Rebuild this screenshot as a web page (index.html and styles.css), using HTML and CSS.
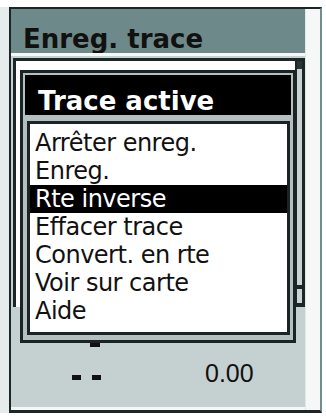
FILE: index.html
```html
<!DOCTYPE html>
<html lang="fr">
<head>
<meta charset="utf-8">
<title>Enreg. trace</title>
<link rel="stylesheet" href="styles.css">
</head>
<body>
<div class="frame">
  <div class="screen">
    <div class="title-bar">Enreg. trace</div>
    <div class="sep"></div>
    <div class="gap"></div>
    <div class="listbox">
      <div class="list-area"></div>
      <div class="scrollbar">
        <div class="arrow"></div>
        <div class="track"></div>
        <div class="thumb"></div>
      </div>
    </div>
    <div class="lower">
      <div class="small-dash"></div>
      <div class="row">
        <div class="dashes"><span class="dash"></span><span class="dash"></span></div>
        <div class="value">0.00</div>
      </div>
    </div>
    <div class="bottom-line"></div>
  </div>
  <div class="edge"></div>

  <div class="popup">
    <div class="popup-title">Trace active</div>
    <div class="menu">
      <div class="item">Arrêter enreg.</div>
      <div class="item">Enreg.</div>
      <div class="item selected">Rte inverse</div>
      <div class="item">Effacer trace</div>
      <div class="item">Convert. en rte</div>
      <div class="item">Voir sur carte</div>
      <div class="item">Aide</div>
    </div>
  </div>
</div>
</body>
</html>
```

FILE: styles.css
```css
html, body {
  margin: 0;
  padding: 0;
}
body {
  background: #ffffff;
  width: 326px;
  height: 418px;
  overflow: hidden;
  font-family: "DejaVu Sans", sans-serif;
}
.frame {
  position: relative;
  margin: 7px 4px 5px 9px;
  height: 406px;
  box-sizing: border-box;
  border-top: 2px solid #1c2626;
  border-left: 2px solid #1c2626;
  border-right: 2px solid #6f8f8f;
  border-bottom: 3px solid #1c2626;
  display: flex;
  box-shadow: -9px 0 0 #e6ebeb;
}
.screen {
  width: 294px;
  display: flex;
  flex-direction: column;
  background: #c5d0d0;
}
.edge {
  flex: 1;
  background: #f6f8f8;
  border-left: 1px solid #e2e8e8;
}
.title-bar {
  height: 44px;
  box-sizing: border-box;
  background: #6d8989;
  color: #111;
  font-weight: bold;
  font-size: 26px;
  line-height: 1;
  padding: 17px 0 0 12px;
  white-space: nowrap;
}
.sep {
  height: 3px;
  background: #f4f8f8;
}
.gap {
  height: 2px;
  background: #c5d0d0;
}
.listbox {
  height: 249px;
  margin-left: 2px;
  display: flex;
  border-top: 3px solid #1c2626;
  border-left: 3px solid #1c2626;
  box-sizing: border-box;
}
.list-area {
  flex: 1;
  background: #ffffff;
}
.scrollbar {
  width: 10px;
  box-sizing: border-box;
  border-left: 2px solid #1c2626;
  border-right: 3px solid #1c2626;
  background: #c9d3d3;
  display: flex;
  flex-direction: column;
}
.arrow {
  height: 8px;
  background: #2a3636;
}
.track {
  flex: 1;
}
.thumb {
  height: 22px;
  background: #c9d3d3;
  border-top: 4px solid #1c2626;
  border-bottom: 4px solid #1c2626;
  box-sizing: border-box;
}
.lower {
  height: 100px;
  box-sizing: border-box;
  padding-top: 34px;
  background: #c5d0d0;
  display: flex;
  flex-direction: column;
}
.small-dash {
  width: 10px;
  height: 6px;
  margin-left: 79px;
  background: #111;
}
.row {
  display: flex;
  align-items: flex-start;
  margin-top: 11px;
}
.dashes {
  display: flex;
  gap: 11px;
  margin-left: 61px;
  margin-top: 17px;
}
.dash {
  width: 9px;
  height: 5px;
  background: #111;
}
.value {
  margin-left: 104px;
  font-family: "Liberation Sans", Arial, sans-serif;
  font-size: 25px;
  line-height: 30px;
  color: #111;
}
.bottom-line {
  height: 3px;
  background: #f4f8f8;
}
.popup {
  position: absolute;
  left: 9px;
  top: 61px;
  width: 276px;
  height: 273px;
  box-sizing: border-box;
  border: 3px solid #1a2424;
  background: #b4c0c0;
  padding: 2px 2px 5px 2px;
  display: flex;
  flex-direction: column;
  gap: 6px;
}
.popup-title {
  height: 40px;
  box-sizing: border-box;
  background: #000;
  color: #fff;
  font-weight: bold;
  font-size: 26px;
  line-height: 1;
  padding: 13px 0 0 13px;
  white-space: nowrap;
}
.menu {
  height: 214px;
  box-sizing: border-box;
  margin: 0 1px 0 2px;
  border: 3px solid #1a2424;
  background: #fff;
  padding-top: 5px;
}
.item {
  height: 28px;
  line-height: 28px;
  font-size: 24px;
  letter-spacing: -0.5px;
  padding-left: 5px;
  color: #111;
  white-space: nowrap;
}
.item.selected {
  background: #000;
  color: #fff;
}
```
